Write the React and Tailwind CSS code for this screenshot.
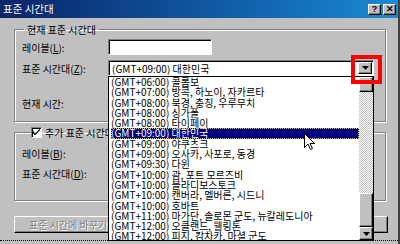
import React from 'react';

const zones = [
  '(GMT+06:00) 콜롬보',
  '(GMT+07:00) 방콕, 하노이, 자카르타',
  '(GMT+08:00) 북경, 충칭, 우루무치',
  '(GMT+08:00) 싱가폴',
  '(GMT+08:00) 타이페이',
  '(GMT+09:00) 대한민국',
  '(GMT+09:00) 야쿠츠크',
  '(GMT+09:00) 오사카, 사포로, 동경',
  '(GMT+09:30) 다윈',
  '(GMT+10:00) 괌, 포트 모르즈비',
  '(GMT+10:00) 블라디보스토크',
  '(GMT+10:00) 캔버라, 멜버른, 시드니',
  '(GMT+10:00) 호바트',
  '(GMT+11:00) 마가단, 솔로몬 군도, 뉴칼레도니아',
  '(GMT+12:00) 오클랜드, 웰링톤',
  '(GMT+12:00) 피지, 캄차카, 마셜 군도',
];

const raised = 'bg-[#c0c0c0] border border-t-white border-l-white border-r-black border-b-black shadow-[inset_-1px_-1px_0_#808080]';
const sunken = 'border border-t-[#808080] border-l-[#808080] border-r-white border-b-white shadow-[inset_1px_1px_0_#000]';
const etched = 'border border-[#808080] shadow-[inset_1px_1px_0_#fff,1px_1px_0_#fff]';

function Arrow() {
  return (
    <svg width="7" height="4" viewBox="0 0 7 4">
      <path d="M0 0h7L3.5 4z" fill="#000" />
    </svg>
  );
}

function Row({ label, u, rest, children }) {
  return (
    <div className="flex items-center h-[16px]">
      <span className="w-[86px] shrink-0">
        {label}(<span className="underline">{u}</span>){rest}
      </span>
      {children}
    </div>
  );
}

function DropList() {
  return (
    <div className="absolute left-[108px] top-[76px] w-[266px] h-[165px] bg-white border border-black flex">
      <div className="flex-1 flex flex-col pl-[2px] overflow-hidden">
        {zones.map((z, i) => (
          <div
            key={i}
            className={
              'h-[10.3px] leading-[10.3px] whitespace-nowrap ' +
              (i === 5 ? 'bg-[#000080] text-white outline outline-1 outline-dotted outline-[#c8c850] -outline-offset-1' : 'text-black')
            }
          >
            {z}
          </div>
        ))}
      </div>
      <div className="w-[14px] flex flex-col">
        <div className={raised + ' h-[15px]'}></div>
        <div className="flex-1 bg-[conic-gradient(#c0c0c0_25%,#fff_0_50%,#c0c0c0_0_75%,#fff_0)] bg-[length:2px_2px]"></div>
        <div className={raised + ' h-[34px]'}></div>
        <div className={raised + ' h-[13px] flex items-center justify-center'}>
          <Arrow />
        </div>
      </div>
    </div>
  );
}

function Cursor() {
  return (
    <svg className="absolute left-[304px] top-[133px]" width="11" height="17" viewBox="0 0 11 17">
      <path d="M0.5 0.5v14l3.5-3.5 2.5 5.5 2-1-2.5-5h4.5z" fill="#fff" stroke="#000" strokeWidth="1" />
    </svg>
  );
}

export default function App() {
  return (
    <div className="w-[400px] h-[244px] bg-[#c0c0c0] relative overflow-hidden flex flex-col text-[10px] text-black border-r-2 border-r-[#404040] font-['Noto_Sans_CJK_KR',sans-serif]">
      <div className="h-[18px] shrink-0 flex items-center pl-[3px] pr-[2px] bg-gradient-to-r from-[#0a246a] to-[#1a8ad4]">
        <span className="text-white text-[10.5px] leading-none">표준 시간대</span>
        <div className="ml-auto flex gap-[2px]">
          <div className={raised + ' w-[13px] h-[11px] flex items-center justify-center font-bold text-[9px] leading-none font-["Liberation_Sans",sans-serif]'}>?</div>
          <div className={raised + ' w-[13px] h-[11px] flex items-center justify-center font-bold text-[9px] leading-none font-["Liberation_Sans",sans-serif]'}>✕</div>
        </div>
      </div>

      <div className="flex-1 flex flex-col pl-[14px] pr-[12px]">
        <fieldset className={etched + ' mt-[6px] h-[98px] px-[7px]'}>
          <legend className="px-[3px] ml-[2px] leading-[11px]">현재 표준 시간대</legend>
          <div className="flex flex-col gap-[5px] mt-[4px]">
            <Row label="레이블" u="L" rest=":">
              <div className={sunken + ' w-[104px] h-[16px] bg-white'}></div>
            </Row>
            <Row label="표준 시간대" u="Z" rest=":">
              <div className={sunken + ' w-[266px] h-[16px] bg-white flex items-center pl-[3px] pr-[1px]'}>
                <span className="whitespace-nowrap">(GMT+09:00) 대한민국</span>
                <div className={raised + ' ml-auto w-[14px] h-[12px] flex items-center justify-center'}>
                  <Arrow />
                </div>
              </div>
            </Row>
            <div className="mt-[15px]">현재 시간:</div>
          </div>
        </fieldset>

        <fieldset className={etched + ' mt-[5px] h-[74px] px-[7px]'}>
          <legend className="ml-[9px] pr-[3px] flex items-center gap-[3px] leading-[11px]">
            <span className={sunken + ' w-[11px] h-[11px] bg-white flex items-center justify-center'}>
              <svg width="7" height="7" viewBox="0 0 7 7">
                <path d="M0 2v2l2 2 5-5v-1l-5 5z" fill="#000" stroke="#000" strokeWidth="0.6" />
              </svg>
            </span>
            추가 표준 시간대 사용
          </legend>
          <div className="flex flex-col gap-[4px] mt-[7px]">
            <Row label="레이블" u="B" rest=":" />
            <Row label="표준 시간대" u="D" rest=":" />
          </div>
        </fieldset>

        <div className="mt-[15px] flex justify-between">
          <div className={raised + ' w-[150px] h-[17px] flex items-center pl-[14px] text-[#808080] [text-shadow:1px_1px_0_#fff]'}>
            표준 시간에 바꾸기...
          </div>
          <div className={raised + ' w-[90px] h-[17px] -mr-[2px]'}></div>
        </div>
      </div>
      <div className="h-[4px] shrink-0 border-t border-dotted border-black"></div>

      <DropList />
      <div className="absolute left-[351px] top-[55px] w-[31px] h-[29px] border-[4px] border-[#ff0000]"></div>
      <Cursor />
    </div>
  );
}
